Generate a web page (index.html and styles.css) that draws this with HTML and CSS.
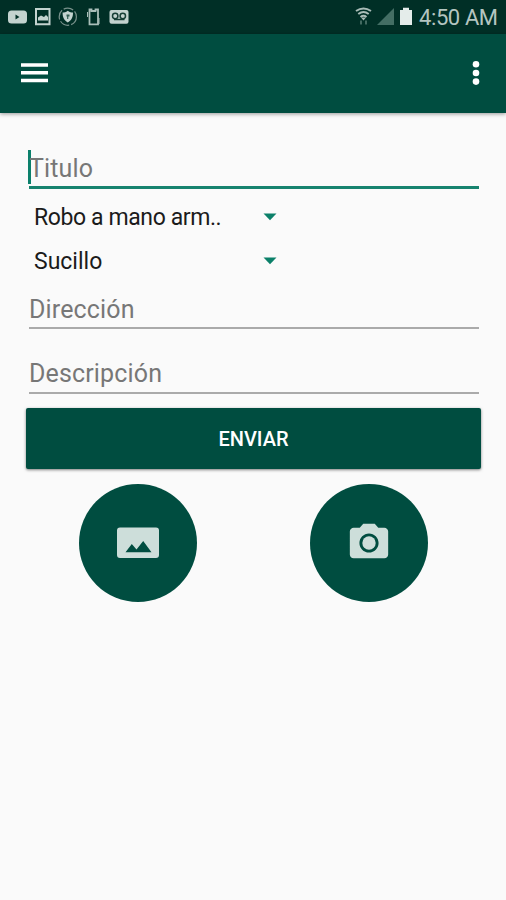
FILE: index.html
```html
<!DOCTYPE html>
<html lang="es">
<head>
<meta charset="utf-8">
<title>Reporte</title>
<link rel="stylesheet" href="styles.css">
</head>
<body>
<div class="status">
  <svg class="status-left" viewBox="0 0 140 33">
    <rect x="8" y="10.500" width="19" height="13" rx="3.500" fill="#c3d3cf"/>
    <path d="M15.500 14.500v5l4-2.500z" fill="#002f26"/>
    <path d="M36 9h13.500v15.200h-13.500z" fill="none" stroke="#c3d3cf" stroke-width="2"/>
    <path d="M38 20.500v-3l3-2 3 1.500 2-2 2 2v3.500z" fill="#c3d3cf"/>
    <circle cx="67.800" cy="16.700" r="8.600" fill="none" stroke="#78918b" stroke-width="1.200" stroke-dasharray="10 2"/>
    <path d="M67.800 10.800c2 1.500 3.500 1.700 5.200 1.700 0 4.500-1.200 7.700-5.200 10-4-2.300-5.200-5.500-5.200-10 1.700 0 3.200-.2 5.200-1.700z" fill="#c3d3cf"/>
    <path d="M66.500 14.500h3v2h-1.200v2.500h-1.200v-2.500h-.6z" fill="#315c51"/>
    <path d="M89.500 9.500h2v1.500h4v-1.500h2.500v14.800h-8.500z" fill="none" stroke="#a9beb9" stroke-width="1.800"/>
    <path d="M87.500 12v5M99 18v6" stroke="#a9beb9" stroke-width="1"/>
    <rect x="109.500" y="10" width="19" height="13.700" rx="2" fill="#c3d3cf"/>
    <g fill="none" stroke="#173f36" stroke-width="1.500"><circle cx="115.200" cy="16" r="2.700"/><circle cx="122.800" cy="16" r="2.700"/><path d="M114 19.500h10.500"/></g>
  </svg>
  <div class="status-right">
    <svg width="58" height="33" viewBox="0 0 58 33">
      <g fill="none" stroke="#a9bcb7" stroke-width="2"><path d="M1 11q7.500-5 15 0"/><path d="M3.300 14q5.200-3.800 10.400 0"/><path d="M5.500 17q3-2.400 6 0"/></g>
      <path d="M8.500 20.500l-2.500-3h5z" fill="#a9bcb7"/>
      <path d="M6 20.500v4M11 20.500v4" stroke="#436a61" stroke-width="2"/>
      <path d="M22 25h17V8z" fill="#436e64"/>
      <path d="M45 10h3V7.800h6V10h3v15H45z" fill="#e4ecea"/>
    </svg>
    <span class="clock">4:50 AM</span>
  </div>
</div>
<header class="bar">
  <svg width="28" height="22" viewBox="0 0 28 22"><path d="M1 3h27M1 10.700h27M1 18.400h27" stroke="#fff" stroke-width="3.500"/></svg>
  <svg width="8" height="26" viewBox="0 0 8 26" fill="#fff"><circle cx="4" cy="4.300" r="3.300"/><circle cx="4" cy="13" r="3.300"/><circle cx="4" cy="21.600" r="3.300"/></svg>
</header>
<main>
  <div class="field field-focus"><i class="caret"></i><span>Titulo</span></div>
  <div class="spinner"><span class="wide">Robo a mano arm..</span><svg width="14" height="8" viewBox="0 0 14 8"><path d="M.5 .5h13L7 7.300z" fill="#0b8069"/></svg></div>
  <div class="spinner"><span>Sucillo</span><svg width="14" height="8" viewBox="0 0 14 8"><path d="M.5 .5h13L7 7.300z" fill="#0b8069"/></svg></div>
  <div class="field field-address"><span>Dirección</span></div>
  <div class="field field-desc"><span>Descripción</span></div>
  <div class="send">ENVIAR</div>
  <div class="actions">
    <div class="round"><svg width="42" height="32" viewBox="0 0 42 32"><path fill-rule="evenodd" fill="#cddeda" d="M3 .5h36a3 3 0 0 1 3 3v24.500a3 3 0 0 1-3 3H3a3 3 0 0 1-3-3V3.500a3 3 0 0 1 3-3zM8.500 25.200h26L26.200 14l-6.700 8.500-4.700-5.500z"/></svg></div>
    <div class="round"><svg width="46" height="46" viewBox="0 0 24 24" fill="#cddeda"><circle cx="12" cy="12" r="3.500"/><path d="M9 2L7.170 4H4c-1.100 0-2 .9-2 2v12c0 1.100.9 2 2 2h16c1.100 0 2-.9 2-2V6c0-1.100-.9-2-2-2h-3.170L15 2H9zm3 15c-2.760 0-5-2.240-5-5s2.240-5 5-5 5 2.240 5 5-2.240 5-5 5z"/></svg></div>
  </div>
</main>
</body>
</html>
```

FILE: styles.css
```css
* { box-sizing: border-box; }
body {
  margin: 0;
  height: 900px;
  overflow: hidden;
  background: #fafafa;
  font-family: Roboto, sans-serif;
}
svg { display: block; flex: none; }
.status {
  height: 34px;
  background: #002f26;
  display: flex;
  justify-content: space-between;
}
.status-left { width: 140px; height: 33px; }
.status-right { display: flex; padding-right: 9px; }
.clock {
  margin-left: 6px;
  width: 78px;
  font-size: 22px;
  letter-spacing: -.4px;
  line-height: 36px;
  white-space: nowrap;
  color: #b4c5c1;
}
.bar {
  height: 79px;
  padding: 0 26px 1px 20px;
  background: #004d40;
  box-shadow: 0 1px 4px rgba(0, 0, 0, .4);
  display: flex;
  align-items: center;
  justify-content: space-between;
}
main { padding: 34px 25px 0 26px; }
.field {
  margin: 0 2px 0 3px;
  font-size: 25px;
  letter-spacing: .15px;
  color: #777;
  display: flex;
  border-bottom: 2px solid #aaa;
}
.field-focus {
  height: 42px;
  line-height: 44px;
  border-bottom: 3px solid #17836f;
  margin-bottom: 6px;
}
.caret {
  width: 3px;
  height: 34px;
  margin: 3px -2px 0 -1px;
  background: #0b806b;
}
.spinner {
  width: 251px;
  height: 43.5px;
  padding: 1px 0 0 8px;
  display: flex;
  align-items: center;
  justify-content: space-between;
  font-size: 23px;
  color: #1b1b1b;
}
.spinner span { padding-top: 1px; }
.wide { letter-spacing: -.4px; }
.field-address { height: 47px; line-height: 56px; }
.field-desc { height: 65px; line-height: 90px; }
.send {
  height: 61px;
  margin-top: 14px;
  border-radius: 2px;
  background: #004d40;
  box-shadow: 0 1px 3px rgba(0, 0, 0, .5);
  color: #fff;
  font-size: 20px;
  font-weight: 500;
  line-height: 63px;
  text-align: center;
}
.actions {
  margin-top: 15px;
  padding: 0 53px;
  display: flex;
  justify-content: space-between;
}
.round {
  width: 118px;
  height: 118px;
  border-radius: 50%;
  background: #004d40;
  display: flex;
  align-items: center;
  justify-content: center;
}
```
